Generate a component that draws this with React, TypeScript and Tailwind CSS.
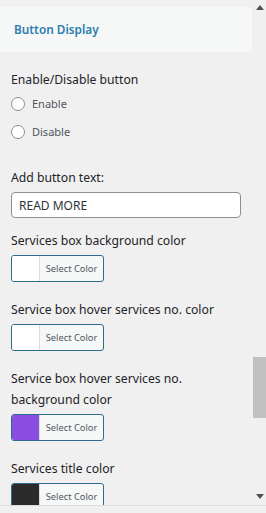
const ColorButton = ({ swatch }: { swatch: string }) => {
  return (
    <button
      type="button"
      className="mt-[4px] flex h-[27px] w-[93px] overflow-hidden rounded-[3px] border border-[#2d6a8c] bg-[#f6f7f7]"
    >
      <span className="h-full w-[28px] border-r border-[#dcdcde]" style={{ backgroundColor: swatch }} />
      <span className="flex flex-1 items-center justify-center text-[9.3px] text-[#50575e]">Select Color</span>
    </button>
  );
};

const ColorField = ({ label, swatch, top = 'mt-[16px]' }: { label: React.ReactNode; swatch: string; top?: string }) => {
  return (
    <div className={top}>
      <div className="text-[12.2px] leading-[21px] text-[#1d2327]">{label}</div>
      <ColorButton swatch={swatch} />
    </div>
  );
};

export default function App() {
  return (
    <main
      className="flex h-[513px] w-[266px] flex-col overflow-hidden bg-[#f0f0f1]"
      style={{ fontFamily: '"Noto Sans", "Open Sans", sans-serif' }}
    >
      <div className="flex h-[505px] flex-row">
        <section className="w-[252px] overflow-hidden pt-[7px]">
          <header className="flex h-[45px] items-center bg-[#f6f7f7] pl-[14px] text-[11.8px] font-semibold text-[#2b7db0]">
            Button Display
          </header>

          <div className="px-[11px]">
            <div className="mt-[17px] text-[12.2px] leading-[21px] text-[#1d2327]">Enable/Disable button</div>
            <label className="flex h-[28px] items-center">
              <span className="h-[14px] w-[14px] rounded-full border border-[#8c8f94] bg-white" />
              <span className="ml-[7px] text-[11px] text-[#50575e]">Enable</span>
            </label>
            <label className="flex h-[28px] items-center">
              <span className="h-[14px] w-[14px] rounded-full border border-[#8c8f94] bg-white" />
              <span className="ml-[7px] text-[11px] text-[#50575e]">Disable</span>
            </label>

            <div className="mt-[21px] text-[12.2px] leading-[21px] text-[#1d2327]">Add button text:</div>
            <input
              type="text"
              defaultValue="READ MORE"
              className="mt-[4px] h-[26px] w-[230px] rounded-[4px] border border-[#8c8f94] bg-white px-[7px] text-[12px] text-[#2c3338] outline-none"
            />

            <ColorField top="mt-[12px]" label="Services box background color" swatch="#ffffff" />
            <ColorField top="mt-[17px]" label="Service box hover services no. color" swatch="#ffffff" />
            <ColorField
              top="mt-[17px]"
              label={
                <>
                  Service box hover services no.
                  <br />
                  background color
                </>
              }
              swatch="#8a4fe0"
            />
            <ColorField top="mt-[17px]" label="Services title color" swatch="#2b2b2b" />
          </div>
        </section>

        {/* scrollbar */}
        <div className="ml-[1px] flex w-[13px] flex-col items-center bg-[#f0f0f0]">
          <svg width="8" height="5" viewBox="0 0 8 5" className="mt-[5px]">
            <path d="M0 5 L4 0 L8 5 Z" fill="#505050" />
          </svg>
          <div className="mt-[347px] h-[61px] w-full bg-[#c1c1c1]" />
          <svg width="8" height="5" viewBox="0 0 8 5" className="mt-auto mb-[6px]">
            <path d="M0 0 L4 5 L8 0 Z" fill="#505050" />
          </svg>
        </div>
      </div>
      <div className="h-[8px] border-t border-[#dcdcde]" />
    </main>
  );
}
